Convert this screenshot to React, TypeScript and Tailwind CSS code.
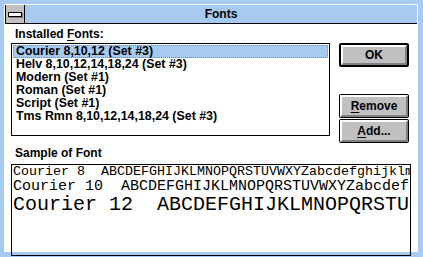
const FONTS = [
  'Courier 8,10,12 (Set #3)',
  'Helv 8,10,12,14,18,24 (Set #3)',
  'Modern (Set #1)',
  'Roman (Set #1)',
  'Script (Set #1)',
  'Tms Rmn 8,10,12,14,18,24 (Set #3)',
];

const sans = { fontFamily: '"Liberation Sans", Arial, sans-serif' };

function Button({ label, mnemonic, isDefault }: { label: string; mnemonic?: number; isDefault?: boolean }) {
  const text =
    mnemonic === undefined ? (
      label
    ) : (
      <>
        {label.slice(0, mnemonic)}
        <span className="underline underline-offset-2">{label[mnemonic]}</span>
        {label.slice(mnemonic + 1)}
      </>
    );
  return (
    <div
      className={`h-[24px] w-[70px] rounded-[2px] bg-black ${isDefault ? 'p-[2px]' : 'p-[1px]'}`}
    >
      <div className="flex h-full w-full items-center justify-center border-t-2 border-l-2 border-b-2 border-r-2 border-t-white border-l-white border-b-[#808080] border-r-[#808080] bg-[#c0c0c0] text-[12px] font-bold leading-none text-black">
        {text}
      </div>
    </div>
  );
}

export default function App() {
  return (
    <div className="h-[257px] w-[423px] bg-[#a6caf0] pt-[4px] pl-[4px] pr-[5px] pb-[5px]" style={sans}>
      <div className="flex h-full w-full flex-col border border-white bg-white">
        {/* title bar */}
        <div className="flex h-[19px] border-b border-black bg-[#a6caf0]">
          <div className="flex h-full w-[20px] items-center justify-center border-x border-black bg-[#c0c0c0]">
            <div className="h-[5px] w-[14px] border border-black bg-white shadow-[1px_1px_0_#808080]" />
          </div>
          <div className="flex-1 text-center text-[12px] font-bold leading-[18px] text-black">Fonts</div>
        </div>

        {/* client */}
        <div className="flex flex-1 flex-col pl-[6px] pt-[4px]">
          <div className="flex">
            <div className="flex w-[319px] flex-col">
              <div className="pl-[4px] text-[12px] font-bold leading-[13px]">
                Installed <span className="underline underline-offset-2">F</span>onts:
              </div>
              <div className="mt-[2px] h-[93px] border border-black p-[1px]">
                {FONTS.map((f, i) => (
                  <div
                    key={f}
                    className={`h-[13px] whitespace-nowrap pl-[3px] text-[12.4px] font-bold leading-[13px] text-black ${
                      i === 0 ? 'bg-[#a6caf0] outline outline-1 -outline-offset-1 outline-dotted outline-[#6c8cb0]' : ''
                    }`}
                  >
                    {f}
                  </div>
                ))}
              </div>
            </div>
            <div className="ml-[9px] flex flex-col pt-[15px]">
              <Button label="OK" isDefault />
              <div className="mt-[27px]">
                <Button label="Remove" mnemonic={0} />
              </div>
              <div className="mt-[1px]">
                <Button label="Add..." mnemonic={0} />
              </div>
            </div>
          </div>

          <div className="mt-[4px] pl-[4px] text-[12px] font-bold leading-[13px]">Sample of Font</div>
          <div
            className="mt-[4px] h-[92px] w-[400px] overflow-hidden border border-black pl-[1px] text-black"
            style={{ fontFamily: '"Liberation Mono", "Courier New", monospace' }}
          >
            <div className="whitespace-pre text-[13.33px] leading-[14px]">
              Courier 8  ABCDEFGHIJKLMNOPQRSTUVWXYZabcdefghijklm
            </div>
            <div className="whitespace-pre text-[15px] leading-[16px]">
              Courier 10  ABCDEFGHIJKLMNOPQRSTUVWXYZabcdef
            </div>
            <div className="whitespace-pre text-[20px] leading-[20px]">
              Courier 12  ABCDEFGHIJKLMNOPQRSTU
            </div>
          </div>
        </div>
      </div>
    </div>
  );
}
